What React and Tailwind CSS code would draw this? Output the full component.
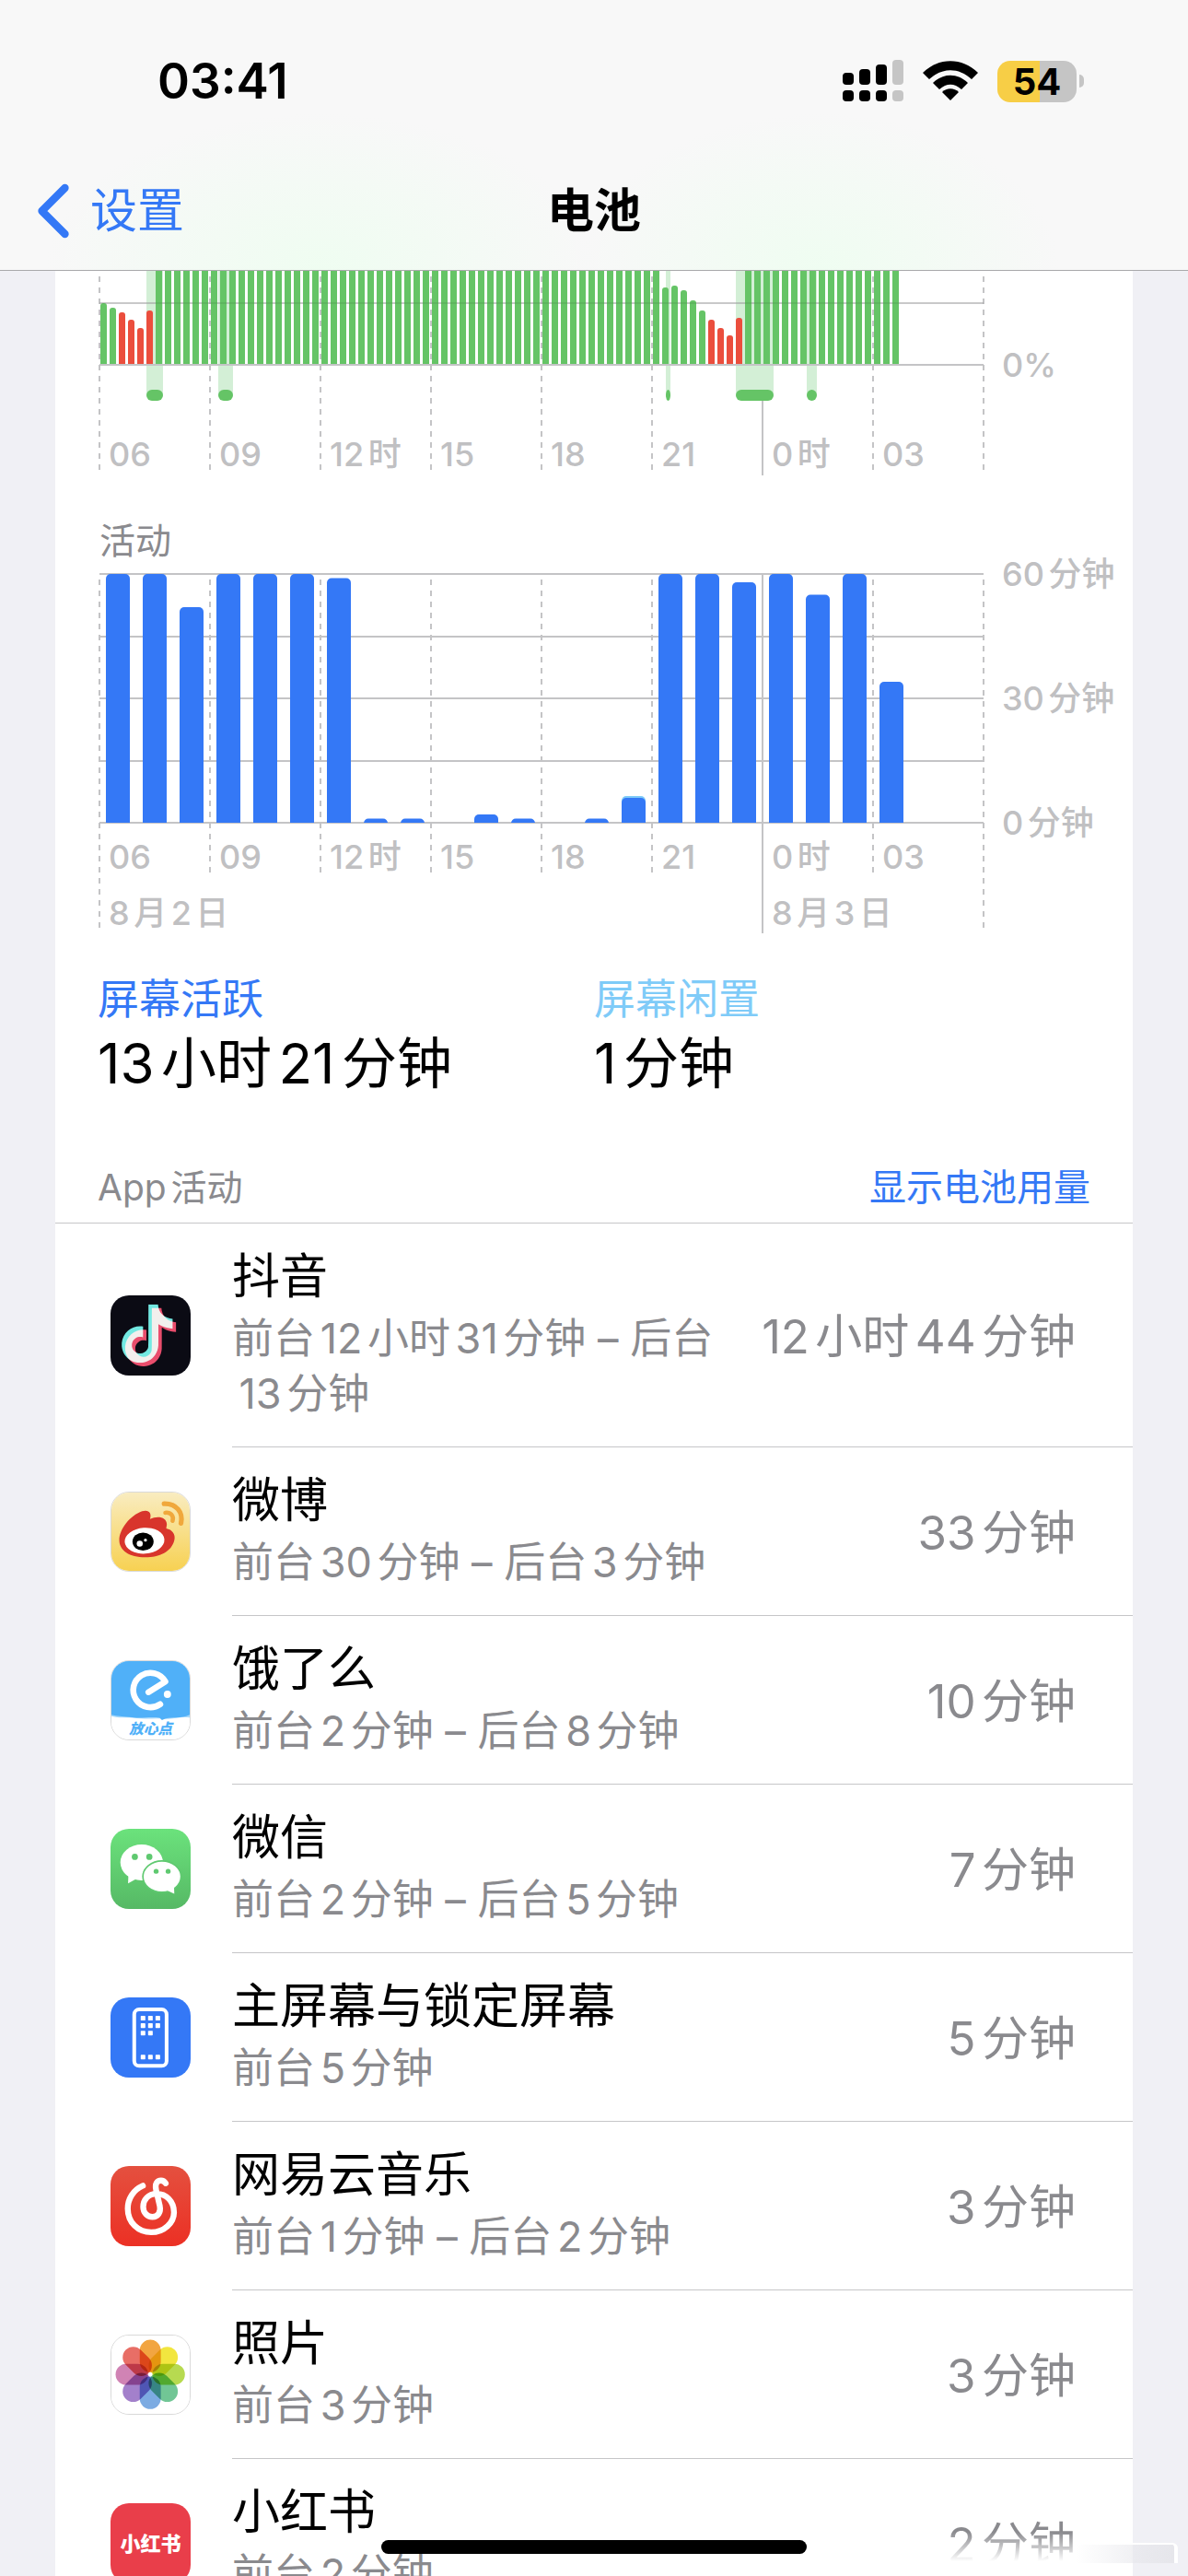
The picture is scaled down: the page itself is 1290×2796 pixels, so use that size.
import { ChevronLeft } from "lucide-react";
import { SiTiktok } from "react-icons/si";

const TICKS = ["06", "09", "12时", "15", "18", "21", "0时", "03"];

// one bar per 15 minutes, null means the bar runs past the visible area
const LEVELS = [
  67, 62, 57, 49, 40, 59,
  ...Array(55).fill(null),
  84, 86, 81, 70, 59, 49, 40, 32, 51,
  ...Array(17).fill(null),
];
const LOW = [2, 3, 4, 5, 66, 67, 68, 69];

// charging periods, in bar units
const CHARGING = [
  { start: 5.1, width: 18 },
  { start: 12.9, width: 16 },
  { start: 61.5, width: 5 },
  { start: 69.1, width: 41 },
  { start: 76.8, width: 11 },
];

// minutes of screen time for each hour
const MINUTES = [
  60, 60, 52, 60, 60, 60, 59, 1, 1, 0, 2, 1, 0, 1, 6, 60, 60, 58, 60, 55, 60,
  34, 0, 0,
];

const pct = (value, total) => `${(value / total) * 100}%`;

function TikTokIcon() {
  return (
    <g className="isolate">
      <rect width="260" height="260" fill="#0b0b14" />
      <SiTiktok x="24" y="29" size="190" color="#6de8e0" className="mix-blend-screen" />
      <SiTiktok x="35" y="40" size="190" color="#e8455f" className="mix-blend-screen" />
    </g>
  );
}

function WeiboIcon() {
  return (
    <>
      <defs>
        <linearGradient id="weibo" x2="0" y2="1">
          <stop offset="0" stopColor="#f9ecc0" />
          <stop offset="1" stopColor="#f7d152" />
        </linearGradient>
      </defs>
      <rect width="260" height="260" fill="url(#weibo)" />
      <path
        d="M26 158C26 122 62 76 102 62C124 55 135 68 128 88C152 76 184 80 184 106L182 119C202 123 214 138 209 158C200 196 160 215 112 215C60 215 26 192 26 158Z"
        fill="#d8352c"
      />
      <ellipse cx="110" cy="160" rx="66" ry="43" fill="#fff" transform="rotate(-4 110 160)" />
      <ellipse cx="105" cy="163" rx="35" ry="30" />
      <circle cx="94" cy="170" r="10" fill="#fff" />
      <circle cx="113" cy="158" r="5" fill="#fff" />
      <g fill="none" stroke="#f0a83c" strokeLinecap="round">
        <path d="M175 37C216 36 239 66 231 102" strokeWidth="16" />
        <path d="M179 67C197 65 208 78 203 94" strokeWidth="14" />
      </g>
    </>
  );
}

function ElemeIcon() {
  return (
    <>
      <rect width="260" height="260" fill="#fff" />
      <path
        d="M0 0H260V187C220 184 200 194 174 192C150 188 120 194 84 190C50 184 30 192 0 183Z"
        fill="#a6d8fb"
      />
      <path
        d="M0 0H260V178C226 192 206 184 178 191L168 196L160 188C120 184 100 192 60 186C36 182 20 184 0 178Z"
        fill="#50b0f8"
      />
      <path
        d="M123 103L179 68A57 57 0 1 0 162 143"
        fill="none"
        stroke="#fff"
        strokeWidth="20"
        strokeLinecap="round"
        strokeLinejoin="round"
      />
      <circle cx="186" cy="110" r="12" fill="#fff" />
      <text x="130" y="243" textAnchor="middle" fill="#50b0f8" fontSize="48" fontWeight="900" fontStyle="italic">
        放心点
      </text>
    </>
  );
}

function WeChatIcon() {
  return (
    <>
      <defs>
        <linearGradient id="wechat" x2="0" y2="1">
          <stop offset="0" stopColor="#6be27c" />
          <stop offset="1" stopColor="#56b965" />
        </linearGradient>
      </defs>
      <rect width="260" height="260" fill="url(#wechat)" />
      <ellipse cx="101" cy="109" rx="69" ry="58" fill="#fff" />
      <path d="M58 150L57 177L84 162Z" fill="#fff" />
      <circle cx="79" cy="91" r="10" fill="#5fc970" />
      <circle cx="126" cy="91" r="10" fill="#5fc970" />
      <ellipse cx="167" cy="155" rx="62" ry="51" fill="#fff" stroke="#5fc970" strokeWidth="5" />
      <path d="M184 200L207 211L206 186Z" fill="#fff" />
      <circle cx="148" cy="138" r="8" fill="#5fc970" />
      <circle cx="187" cy="138" r="8" fill="#5fc970" />
    </>
  );
}

function HomeScreenIcon() {
  const dots = [
    [98, 60], [122, 60], [146, 60],
    [98, 84], [122, 84], [146, 84],
    [98, 108], [122, 108],
    [98, 186], [122, 186], [146, 186],
  ];
  return (
    <>
      <rect width="260" height="260" fill="#3478f6" />
      <rect x="77" y="39" width="105" height="183" rx="16" fill="none" stroke="#fff" strokeWidth="12" />
      {dots.map(([x, y]) => (
        <rect key={`${x}-${y}`} x={x} y={y} width="15" height="15" rx="2" fill="#fff" />
      ))}
    </>
  );
}

function NeteaseIcon() {
  return (
    <>
      <defs>
        <linearGradient id="netease" x2="0" y2="1">
          <stop offset="0" stopColor="#e4503f" />
          <stop offset="1" stopColor="#ec3024" />
        </linearGradient>
      </defs>
      <rect width="260" height="260" fill="url(#netease)" />
      <path
        d="M105 64C73 78 56 107 56 138C56 184 90 215 132 215C174 215 206 184 206 150C206 114 180 90 150 90C122 90 106 110 106 132C106 152 120 165 136 165C154 165 164 150 160 130L148 78C143 56 152 47 164 47C171 47 175 50 179 56"
        fill="none"
        stroke="#fff"
        strokeWidth="19"
        strokeLinecap="round"
      />
    </>
  );
}

function PhotosIcon() {
  const petals = [
    "#f2a541", "#f2e63f", "#b7da50", "#71c695",
    "#7cabe2", "#a380cb", "#d083b4", "#e86e66",
  ];
  return (
    <g className="isolate">
      <rect width="260" height="260" fill="#fff" />
      {petals.map((color, i) => (
        <rect
          key={color}
          x="94"
          y="14"
          width="70"
          height="108"
          rx="35"
          fill={color}
          transform={`rotate(${i * 45} 129 129)`}
          className="mix-blend-multiply"
        />
      ))}
    </g>
  );
}

function XiaohongshuIcon() {
  return (
    <>
      <rect width="260" height="260" fill="#e93e4a" />
      <text x="130" y="156" textAnchor="middle" fill="#fff" fontSize="66" fontWeight="900">
        小红书
      </text>
    </>
  );
}

const APPS = [
  { name: "抖音", detail: "前台12小时31分钟 – 后台\n\u200613分钟", total: "12小时44分钟", icon: TikTokIcon },
  { name: "微博", detail: "前台30分钟 – 后台3分钟", total: "33分钟", icon: WeiboIcon, outline: true },
  { name: "饿了么", detail: "前台2分钟 – 后台8分钟", total: "10分钟", icon: ElemeIcon, outline: true },
  { name: "微信", detail: "前台2分钟 – 后台5分钟", total: "7分钟", icon: WeChatIcon },
  { name: "主屏幕与锁定屏幕", detail: "前台5分钟", total: "5分钟", icon: HomeScreenIcon },
  { name: "网易云音乐", detail: "前台1分钟 – 后台2分钟", total: "3分钟", icon: NeteaseIcon },
  { name: "照片", detail: "前台3分钟", total: "3分钟", icon: PhotosIcon, outline: true },
  { name: "小红书", detail: "前台2分钟", total: "2分钟", icon: XiaohongshuIcon, faded: true },
];

function StatusBar() {
  return (
    <div className="flex items-center justify-between pt-[54px] pl-[171px] pr-[113px]">
      <span className="text-[53px] leading-[68px] font-semibold">03:41</span>
      <div className="flex items-center gap-[21px]">
        <svg width="66" height="46" viewBox="0 0 66 46">
          {[14, 10, 5, 0].map((top, i) => (
            <g key={top} fill={i === 3 ? "#c5c5c5" : "#000"}>
              <rect x={i * 18} y={top} width="12" height={27 - top} rx="4" />
              <rect x={i * 18} y="33" width="12" height="12" rx="4" />
            </g>
          ))}
        </svg>
        <svg width="60" height="44" viewBox="0 0 60 44">
          <path d="M0 13C17 -4 43 -4 60 13L53 20C39 7 21 7 7 20Z" />
          <path d="M11 24C22 13 38 13 49 24L42 31C34 24 26 24 18 31Z" />
          <path d="M21 34C26 29 34 29 39 34L30 43Z" />
        </svg>
        <div className="flex items-center gap-[3px]">
          <div className="flex h-[45px] w-[86px] items-center justify-center rounded-[14px] bg-linear-to-r from-[#f7ce46] from-54% to-[#c5c5c5] to-54%">
            <span className="text-[40px] leading-[45px] font-bold">54</span>
          </div>
          <div className="h-[14px] w-[5px] rounded-r-full bg-[#c5c5c5]" />
        </div>
      </div>
    </div>
  );
}

function Header() {
  return (
    <header className="shrink-0 border-b border-[#a9a9ab] bg-[#f8f8f8] bg-[radial-gradient(ellipse_300px_170px_at_27%_100%,#effdf1,transparent),radial-gradient(ellipse_260px_170px_at_69%_100%,#effdf1,transparent)]">
      <StatusBar />
      <nav className="grid h-[171px] grid-cols-3 items-center px-[8px] pt-[42px]">
        <button type="button" className="flex items-center text-[51px] leading-[60px] text-[#3478f6]">
          <ChevronLeft size={100} strokeWidth={2} className="-mr-[10px] shrink-0" />
          设置
        </button>
        <h1 className="text-center text-[51px] leading-[60px] font-semibold">电池</h1>
      </nav>
    </header>
  );
}

function Tick({ index, bottom }) {
  const midnight = index === 6;
  return (
    <line
      x1={pct(index, 8)}
      x2={pct(index, 8)}
      y1={bottom + (midnight ? 6 : 0)}
      y2="0"
      stroke="#c4c4c6"
      strokeWidth="2"
      strokeDasharray={midnight ? undefined : "6 6"}
    />
  );
}

function Label({ x, y, dx = 10, children }) {
  return (
    <text x={x} dx={dx} y={y} fill="#c0c0c2" fontSize="36" fontWeight="500">
      {children}
    </text>
  );
}

function BatteryChart() {
  return (
    <svg className="block h-[222px] w-full overflow-visible">
      {TICKS.map((tick, i) => (
        <Tick key={tick} index={i} bottom={216} />
      ))}
      <Tick index={8} bottom={216} />
      {CHARGING.map(({ start, width }) => (
        <g key={start}>
          <rect x={pct(start, 96)} width={width} height="135" fill="#d3efd6" />
          <rect x={pct(start, 96)} y="129" width={width} height="12" rx="6" fill="#65c466" />
        </g>
      ))}
      <line x2="100%" y1="35" y2="35" stroke="#b4b4b6" />
      {LEVELS.map((level, i) => (
        <svg key={i} x={pct(i, 96)} width="10" height="102">
          <rect
            x="1"
            y={level ? 102 - level : -10}
            width="7"
            height="140"
            rx="3"
            fill={LOW.includes(i) ? "#eb4e3d" : "#65c466"}
          />
        </svg>
      ))}
      <line x2="100%" y1="35" y2="35" stroke="#000" strokeOpacity="0.15" />
      <line x2="100%" y1="102" y2="102" stroke="#c4c4c6" strokeWidth="2" />
      {TICKS.map((tick, i) => (
        <Label key={tick} x={pct(i, 8)} y="212">
          {tick}
        </Label>
      ))}
      <Label x="100%" dx={20} y="115">
        0%
      </Label>
    </svg>
  );
}

function ActivityChart() {
  return (
    <svg className="block h-[390px] w-full overflow-visible">
      {[0, 68, 135, 203, 270].map((y) => (
        <line key={y} x2="100%" y1={y} y2={y} stroke="#c4c4c6" strokeWidth="2" />
      ))}
      {[384, 324, 324, 324, 324, 324, 384, 324, 384].map((bottom, i) => (
        <Tick key={i} index={i} bottom={bottom} />
      ))}
      {MINUTES.map((minutes, i) => (
        <svg key={i} x={pct(i, 24)} width="40" height="270">
          {i === 14 && <rect x="7" y="241" width="26" height="29" rx="5" fill="#7fcbf8" />}
          {minutes > 0 && (
            <rect x="7" y={270 - minutes * 4.5} width="26" height="300" rx="5" fill="#3478f6" />
          )}
        </svg>
      ))}
      {TICKS.map((tick, i) => (
        <Label key={tick} x={pct(i, 8)} y="320">
          {tick}
        </Label>
      ))}
      <Label x="0%" y="381">8月2日</Label>
      <Label x="75%" y="381">8月3日</Label>
      <Label x="100%" dx={20} y="13">60分钟</Label>
      <Label x="100%" dx={20} y="148">30分钟</Label>
      <Label x="100%" dx={20} y="283">0分钟</Label>
    </svg>
  );
}

function Summary({ label, value, color }) {
  return (
    <div>
      <dt className={`text-[45px] leading-[60px] ${color}`}>{label}</dt>
      <dd className="text-[60px] leading-[78px]">{value}</dd>
    </div>
  );
}

function AppRow({ app }) {
  const Icon = app.icon;
  return (
    <li className="flex items-center pl-[60px]">
      <svg
        viewBox="0 0 260 260"
        className={`size-[87px] shrink-0 rounded-[20px] ${app.outline ? "border border-black/15" : ""}`}
      >
        <Icon />
      </svg>
      <div className="ml-[45px] flex grow items-center justify-between self-stretch border-b border-[#c6c6c8] py-[20px] pr-[62px]">
        <div className="pb-[7px]">
          <p className="text-[52px] leading-[75px]">{app.name}</p>
          <p className="text-[45px] leading-[60px] whitespace-pre-line text-[#8a8a8e]">{app.detail}</p>
        </div>
        <p
          className={`pt-[4px] text-[51px] whitespace-nowrap ${
            app.faded
              ? "bg-linear-to-b from-[#8a8a8e] from-35% to-white to-75% bg-clip-text text-transparent"
              : "text-[#8a8a8e]"
          }`}
        >
          {app.total}
        </p>
      </div>
    </li>
  );
}

export default function App() {
  return (
    <div className="relative flex h-screen flex-col overflow-hidden bg-[#f0f0f5] font-['Inter','Noto_Sans_CJK_SC',sans-serif] text-black [text-autospace:normal]">
      <Header />
      <main className="mx-[60px] min-h-0 grow overflow-hidden bg-white">
        <section className="pr-[162px] pl-[48px]">
          <BatteryChart />
          <h2 className="mt-[41px] mb-[6px] text-[39px] leading-[60px] text-[#8a8a8e]">活动</h2>
          <ActivityChart />
        </section>
        <dl className="mt-[42px] grid grid-cols-2 px-[46px]">
          <Summary label="屏幕活跃" value="13小时21分钟" color="text-[#3478f6]" />
          <Summary label="屏幕闲置" value="1分钟" color="text-[#7fcbf8]" />
        </dl>
        <div className="mt-[66px] flex items-center justify-between border-b border-[#c6c6c8] px-[46px] pb-[8px] leading-[60px]">
          <h2 className="text-[39px] text-[#8a8a8e]">App活动</h2>
          <button type="button" className="text-[40px] text-[#3478f6]">
            显示电池用量
          </button>
        </div>
        <ul>
          {APPS.map((app) => (
            <AppRow key={app.name} app={app} />
          ))}
        </ul>
      </main>
      <div className="absolute right-[11px] bottom-[14px] h-[22px] w-[110px] rounded-tr-[6px] border-t-2 border-r-4 border-white bg-linear-to-r from-transparent to-[#e6e6eb]" />
      <div className="absolute bottom-[24px] left-1/2 h-[15px] w-[462px] -translate-x-1/2 rounded-full bg-black" />
    </div>
  );
}
